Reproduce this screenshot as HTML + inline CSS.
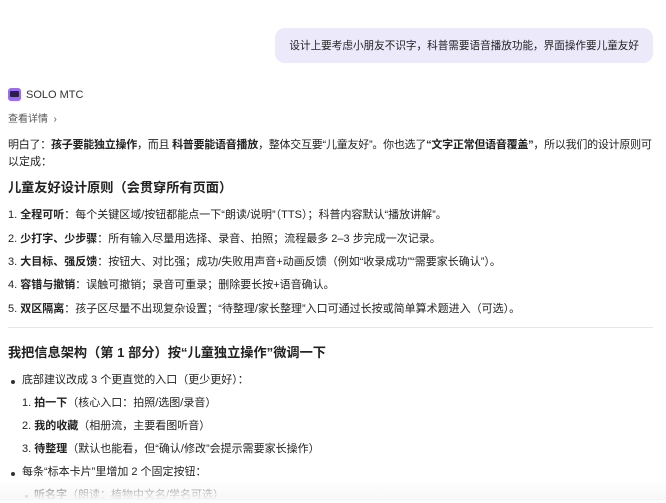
<!DOCTYPE html>
<html><head><meta charset="utf-8"><style>
html,body{margin:0;padding:0;background:#fff;}
body{width:666px;height:500px;overflow:hidden;position:relative;font-family:"Liberation Sans","Noto Sans CJK SC",sans-serif;color:#222;font-size:11px;}
.l{position:absolute;left:8px;white-space:nowrap;line-height:16px;}
b{font-weight:700;}
.bubble{position:absolute;left:275px;top:28px;width:378px;height:35px;background:#ece9fb;border-radius:10px;}
.bubble span{position:absolute;right:14px;top:10px;font-size:10.6px;line-height:16px;white-space:nowrap;}
h2{position:absolute;left:8px;margin:0;font-size:13.2px;font-weight:700;white-space:nowrap;line-height:20px;}
.hr{position:absolute;left:8px;width:645px;top:327px;height:1px;background:#e6e6ea;}
.dot{position:absolute;left:11px;width:4px;height:4px;border-radius:2px;background:#333;}
.fade{position:absolute;left:0;top:480px;width:666px;height:20px;background:linear-gradient(rgba(255,255,255,0.3),#f7f7f7);}
</style></head><body>
<div class="bubble"><span>设计上要考虑小朋友不识字，科普需要语音播放功能，界面操作要儿童友好</span></div>
<div style="position:absolute;left:8px;top:88px;width:13px;height:13px;border-radius:3px;background:#9b6cf0;"><div style="position:absolute;left:2px;top:3px;width:9px;height:6px;background:#2a1f4a;border-radius:1px;"></div></div>
<div class="l" style="left:26px;top:87px;font-size:11px;color:#333;">SOLO MTC</div>
<div class="l" style="top:112px;font-size:10px;color:#555;">查看详情 &nbsp;›</div>
<div class="l" style="top:137px;letter-spacing:-0.25px;">明白了：<b>孩子要能独立操作</b>，而且 <b>科普要能语音播放</b>，整体交互要“儿童友好”。你也选了<b>“文字正常但语音覆盖”</b>，所以我们的设计原则可</div>
<div class="l" style="top:154px;">以定成：</div>
<h2 style="top:178px;">儿童友好设计原则（会贯穿所有页面）</h2>
<div class="l" style="top:207px;">1. <b>全程可听</b>：每个关键区域/按钮都能点一下“朗读/说明”（TTS）；科普内容默认“播放讲解”。</div>
<div class="l" style="top:231px;">2. <b>少打字、少步骤</b>：所有输入尽量用选择、录音、拍照；流程最多 2–3 步完成一次记录。</div>
<div class="l" style="top:254px;">3. <b>大目标、强反馈</b>：按钮大、对比强；成功/失败用声音+动画反馈（例如“收录成功”“需要家长确认”）。</div>
<div class="l" style="top:277px;">4. <b>容错与撤销</b>：误触可撤销；录音可重录；删除要长按+语音确认。</div>
<div class="l" style="top:301px;">5. <b>双区隔离</b>：孩子区尽量不出现复杂设置；“待整理/家长整理”入口可通过长按或简单算术题进入（可选）。</div>
<div class="hr"></div>
<h2 style="top:343px;">我把信息架构（第 1 部分）按“儿童独立操作”微调一下</h2>
<div class="dot" style="top:380px;"></div>
<div class="l" style="left:22px;top:372px;">底部建议改成 3 个更直觉的入口（更少更好）：</div>
<div class="l" style="left:22px;top:395px;">1. <b>拍一下</b>（核心入口：拍照/选图/录音）</div>
<div class="l" style="left:22px;top:418px;">2. <b>我的收藏</b>（相册流，主要看图听音）</div>
<div class="l" style="left:22px;top:441px;">3. <b>待整理</b>（默认也能看，但“确认/修改”会提示需要家长操作）</div>
<div class="dot" style="top:472px;"></div>
<div class="l" style="left:22px;top:464px;">每条“标本卡片”里增加 2 个固定按钮：</div>
<div class="dot" style="left:25px;top:495px;width:3px;height:3px;"></div>
<div class="l" style="left:34px;top:487px;"><b>听名字</b>（朗读：植物中文名/学名可选）</div>
<div class="fade"></div>
</body></html>
